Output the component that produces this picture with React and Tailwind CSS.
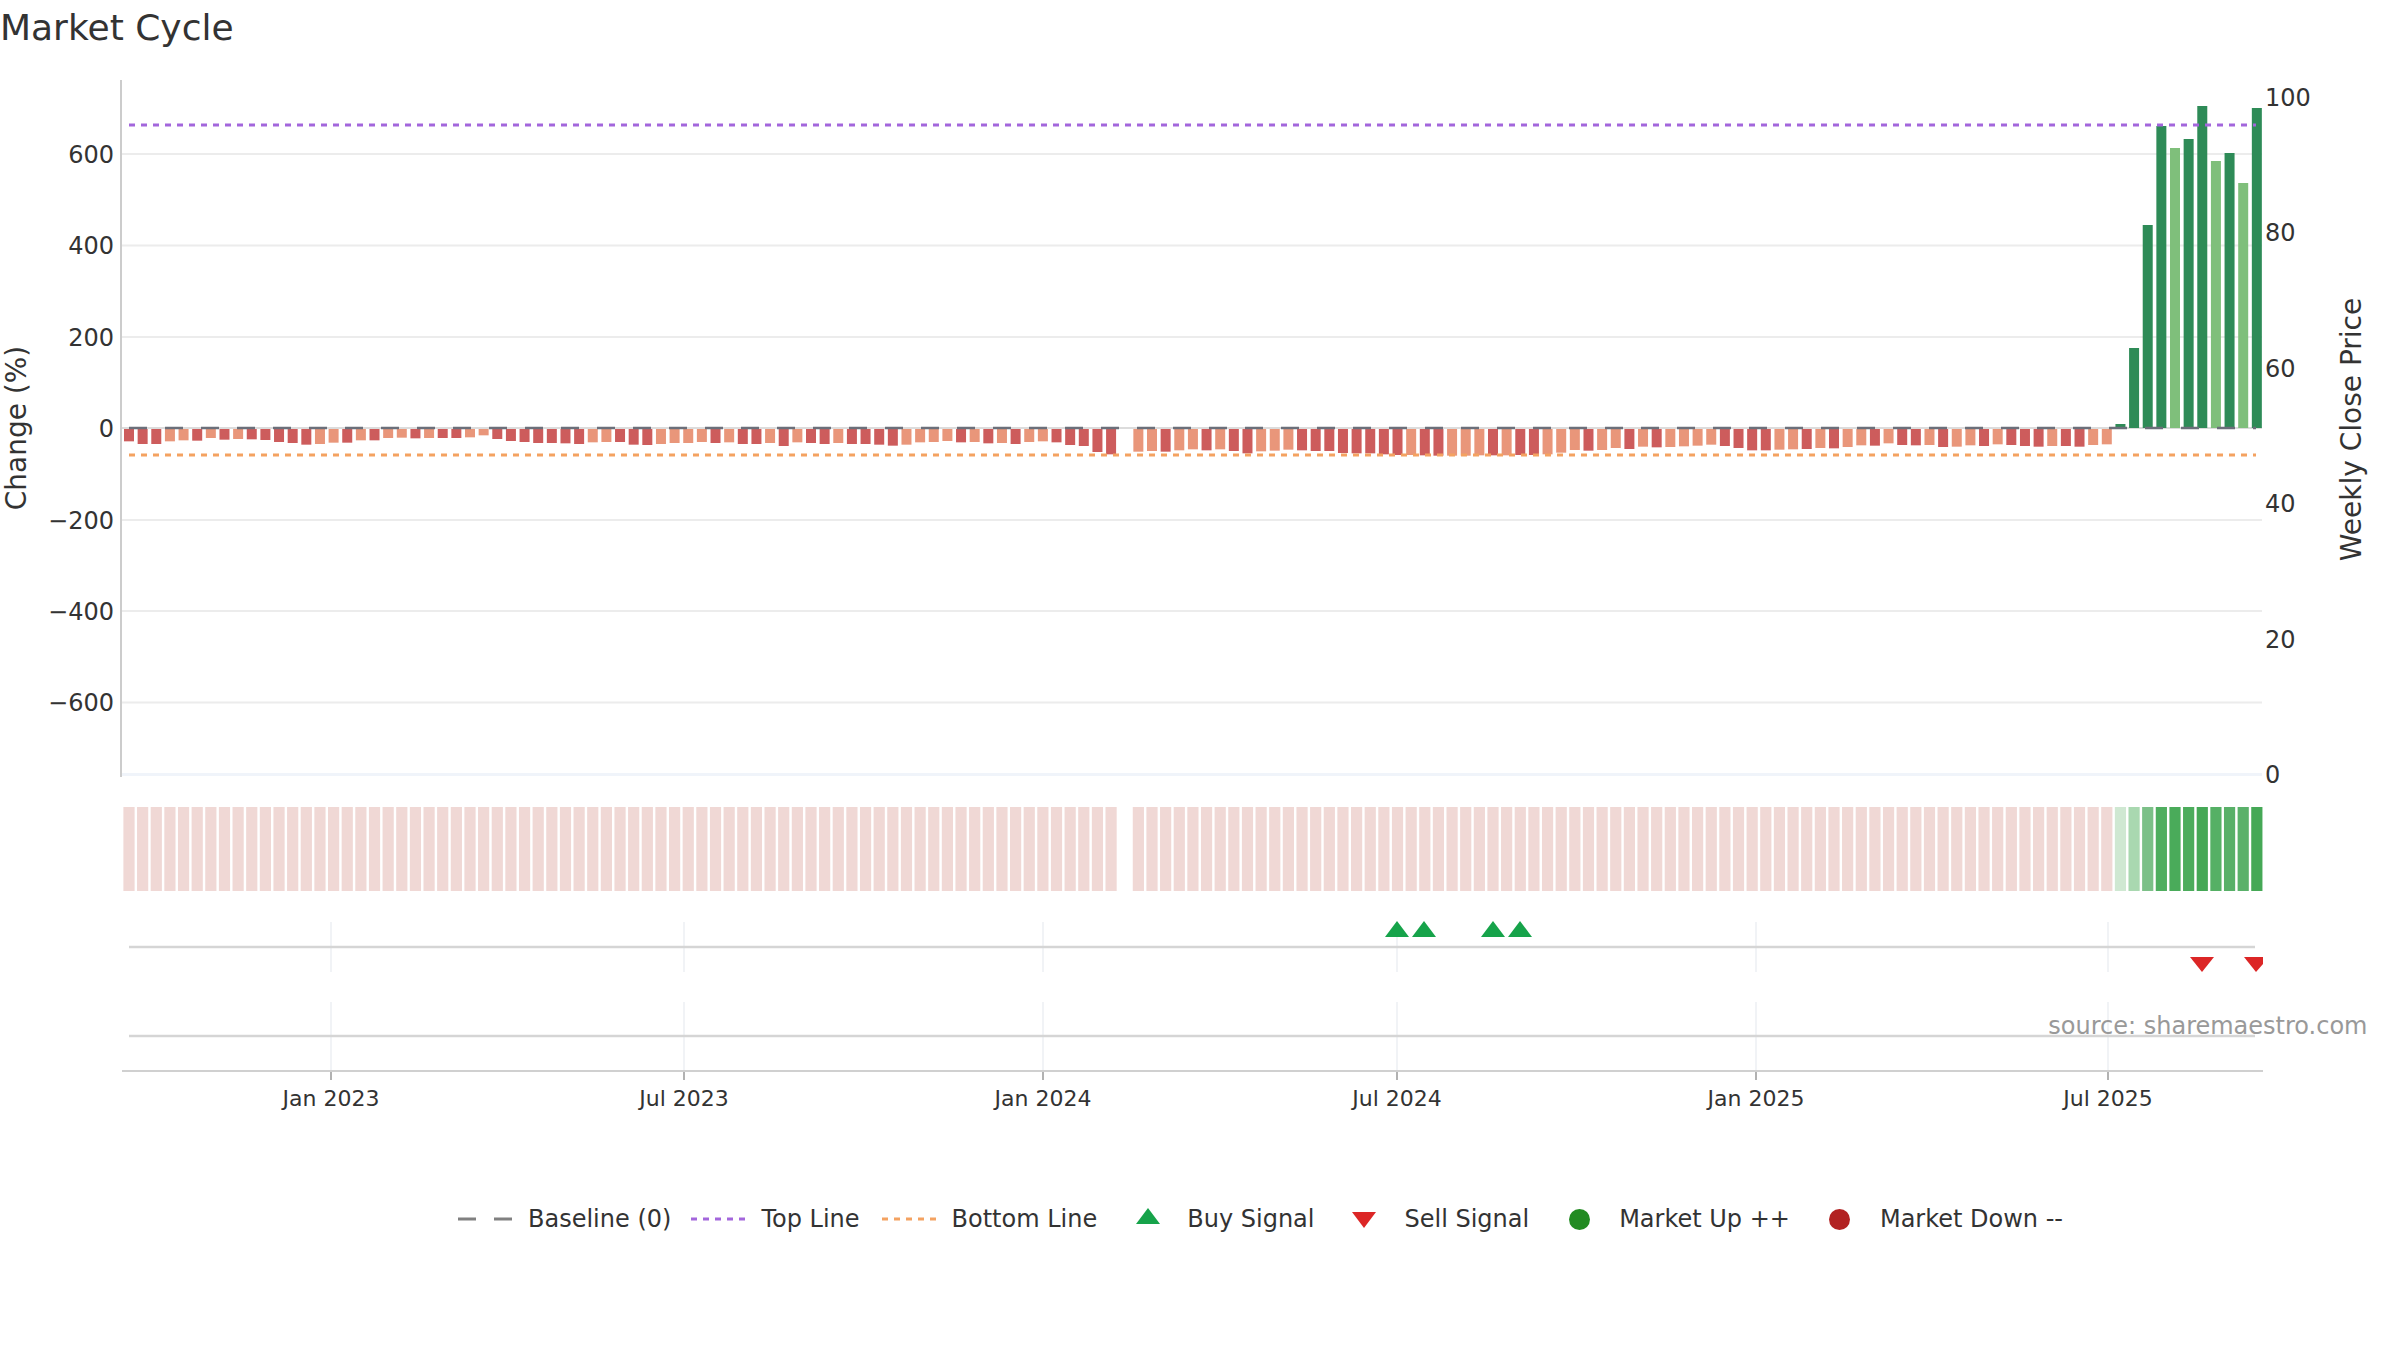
const DEPTHS = [
  64, 72, 72, 64, 61, 62, 54, 59, 57, 58, 60, 66, 69, 74, 72, 68, 68, 61, 61, 54, 53, 55, 54, 54, 54, 52, 46, 57, 63, 66, 69, 69, 70, 72,
  67, 66, 66, 74, 75, 72, 69, 69, 66, 69, 67, 72, 72, 69, 78, 67, 69, 72, 69, 72, 72, 74, 77, 74, 67, 66, 63, 67, 66, 70, 69, 72, 66, 64, 67, 75, 78, 96, 103,
  null,
  95, 93, 95, 91, 88, 91, 88, 93, 100, 94, 92, 89, 91, 93, 93, 99, 100, 100, 103, 105, 105, 106, 107, 107, 107, 106, 106, 106, 105, 105, 103, 98, 90, 92, 90, 84,
  87, 80, 82, 81, 79, 77, 74, 78, 84, 91, 91, 89, 88, 87, 84, 85, 81, 76, 77, 70, 75, 76, 75, 81, 80, 76, 78, 73, 75, 78, 80, 78, 78, 80, 75, 73,
];
const SALMON = new Set([3, 4, 6, 8, 14, 15, 17, 19, 20, 22, 25, 26, 34, 35, 39, 40, 41, 42, 44, 47, 49, 52, 57, 58, 59, 60, 62, 64, 66, 67, 74, 75, 77, 78, 80, 83, 84, 85, 94, 97, 98, 99, 101, 104, 105, 106, 108, 109, 111, 113, 114, 115, 116, 121, 122, 124, 126, 127, 129, 132, 134, 135, 137, 141, 144, 145]);

// last 11 weeks, top y of each green bar
const GREENS = [
  [424, '#2e8b57'], [348, '#2e8b57'], [225, '#2e8b57'], [126, '#2e8b57'], [148, '#7fbf7b'], [139, '#2e8b57'],
  [106, '#2e8b57'], [161, '#7fbf7b'], [153, '#2e8b57'], [183, '#7fbf7b'], [108, '#2e8b57'],
];
const HEAT_GREENS = ['#cfe8d2', '#a9d8b0', '#7cc088', '#4fae5f', '#4aab5a', '#4cac5c', '#45a856', '#55b065', '#58b068', '#5ab16a', '#45a856'];

const barX = (i) => 129 + i * 13.64;

const LEFT_TICKS = [['600', 154], ['400', 245.5], ['200', 337], ['0', 428], ['−200', 520], ['−400', 611], ['−600', 702.5]];
const RIGHT_TICKS = ['100', '80', '60', '40', '20', '0'];
const MONTHS = [['Jan 2023', 331], ['Jul 2023', 684], ['Jan 2024', 1043], ['Jul 2024', 1397], ['Jan 2025', 1756], ['Jul 2025', 2108]];

function Chart() {
  return (
    <svg width="2400" height="1134" viewBox="0 56 2400 1134" className="block shrink-0">
      {/* grid */}
      {LEFT_TICKS.map(([label, y]) => (
        <line key={label} x1="122" x2="2262" y1={y} y2={y} stroke={label === '0' ? '#dcdcdc' : '#ececec'} strokeWidth="2" />
      ))}
      <rect x="122" y="773" width="2140" height="3" fill="#f0f4fa" />
      <line x1="121" x2="121" y1="80" y2="777" stroke="#cccccc" strokeWidth="2" />

      {/* weekly change bars */}
      {DEPTHS.map((d, i) => d !== null && (
        <rect key={i} x={barX(i) - 5} y="429" width="10" height={(d - 27) / 3} fill={SALMON.has(i) ? '#e9967a' : '#cd5c5c'} />
      ))}
      {GREENS.map(([top, color], i) => (
        <rect key={i} x={barX(146 + i) - 5} y={top} width="10" height={428 - top} fill={color} />
      ))}

      <line x1="129" x2="2256" y1="428" y2="428" stroke="#6b6f7a" strokeWidth="2.5" strokeDasharray="18 18" />
      <line x1="129" x2="2256" y1="125" y2="125" stroke="#a366dc" strokeWidth="3" strokeDasharray="6 6" />
      <line x1="129" x2="2256" y1="455" y2="455" stroke="#f4a261" strokeWidth="3" strokeDasharray="6 6" />

      {LEFT_TICKS.map(([label, y]) => (
        <text key={label} x="114" y={y + 8.7} textAnchor="end" className="text-[24px] fill-[#333333]">{label}</text>
      ))}
      {RIGHT_TICKS.map((label, i) => (
        <text key={label} x="2265" y={97 + i * 135.5 + 8.7} className="text-[24px] fill-[#333333]">{label}</text>
      ))}
      <text transform="rotate(-90 26 428)" x="26" y="428" textAnchor="middle" className="text-[28px] fill-[#333333]">Change (%)</text>
      <text transform="rotate(-90 2361 429.5)" x="2361" y="429.5" textAnchor="middle" className="text-[28px] fill-[#333333]">Weekly Close Price</text>

      {/* market state strip */}
      {DEPTHS.map((d, i) => d !== null && (
        <rect key={i} x={barX(i) - 5.6} y="807" width="11.2" height="84" fill="#f0d8d5" />
      ))}
      {HEAT_GREENS.map((color, i) => (
        <rect key={i} x={barX(146 + i) - 5.6} y="807" width="11.2" height="84" fill={color} />
      ))}

      {/* signal rows */}
      {MONTHS.map(([label, x]) => (
        <g key={label}>
          <line x1={x} x2={x} y1="922" y2="972" stroke="#eceff3" strokeWidth="1.5" />
          <line x1={x} x2={x} y1="1002" y2="1071" stroke="#eceff3" strokeWidth="1.5" />
          <line x1={x} x2={x} y1="1071" y2="1080" stroke="#999999" strokeWidth="1.5" />
          <text x={x} y="1106" textAnchor="middle" className="text-[22px] fill-[#333333]">{label}</text>
        </g>
      ))}
      <line x1="129" x2="2255" y1="947" y2="947" stroke="#d5d5d5" strokeWidth="2.5" />
      <line x1="129" x2="2255" y1="1036" y2="1036" stroke="#d5d5d5" strokeWidth="2.5" />
      <line x1="122" x2="2263" y1="1071" y2="1071" stroke="#d0d0d0" strokeWidth="2" />

      {[1397, 1424, 1493, 1520].map((x) => (
        <polygon key={x} points={`${x},921 ${x + 12},937 ${x - 12},937`} fill="#16a34a" />
      ))}
      <polygon points="2190,957 2214,957 2202,972" fill="#dc2626" />
      <polygon points="2244,957 2263,957 2263,964 2256,972" fill="#dc2626" />

      <text x="2367.5" y="1034" textAnchor="end" className="text-[24px] fill-[#999999]">source: sharemaestro.com</text>
    </svg>
  );
}

function LineIcon({ color, dash }) {
  return (
    <svg width="56" height="6" className="block">
      <line x1="0" x2="56" y1="3" y2="3" stroke={color} strokeWidth="3" strokeDasharray={dash} />
    </svg>
  );
}

function Legend() {
  return (
    <div className="flex h-[58px] items-center pl-[458px] text-[24px] leading-none text-[#333333] whitespace-nowrap">
      <LineIcon color="#808080" dash="18 18" />
      <span className="ml-[14px]">Baseline (0)</span>
      <div className="ml-[20px]"><LineIcon color="#a366dc" dash="6 6" /></div>
      <span className="ml-[14px]">Top Line</span>
      <div className="ml-[22px]"><LineIcon color="#f4a261" dash="6 6" /></div>
      <span className="ml-[14px]">Bottom Line</span>
      <svg width="24" height="16" className="ml-[39px] block -translate-y-[3px]"><polygon points="12,0 24,16 0,16" fill="#16a34a" /></svg>
      <span className="ml-[27px]">Buy Signal</span>
      <svg width="24" height="16" className="ml-[38px] block translate-y-[1px]"><polygon points="0,0 24,0 12,16" fill="#dc2626" /></svg>
      <span className="ml-[28px]">Sell Signal</span>
      <span className="ml-[40px] h-[21px] w-[21px] rounded-full bg-[#228b22]" />
      <span className="ml-[29px]">Market Up ++</span>
      <span className="ml-[39px] h-[21px] w-[21px] rounded-full bg-[#b22222]" />
      <span className="ml-[30px]">Market Down --</span>
    </div>
  );
}

export default function App() {
  return (
    <div className="flex h-[1350px] w-[2400px] flex-col overflow-hidden bg-white font-['DejaVu_Sans',sans-serif]">
      <h1 className="h-[56px] shrink-0 pt-[6px] text-[36px] leading-[44px] font-normal text-[#333333]">Market Cycle</h1>
      <Chart />
      <Legend />
    </div>
  );
}
